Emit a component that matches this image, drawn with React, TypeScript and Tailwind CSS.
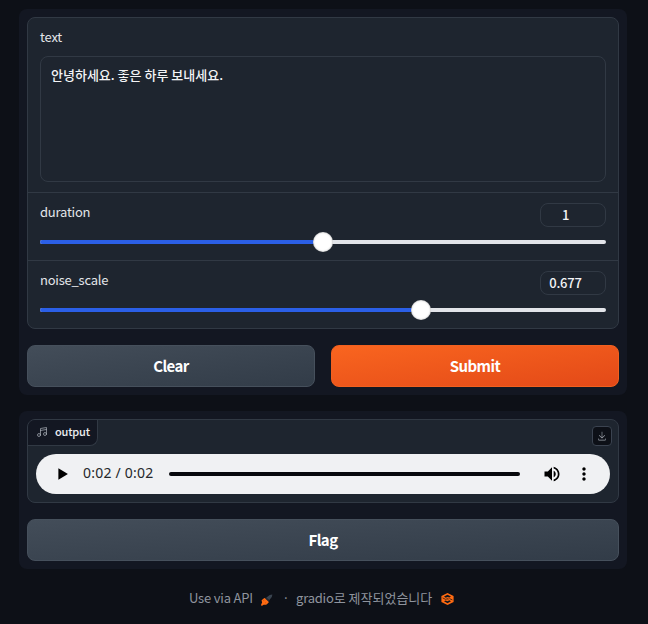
import React from "react";

function Slider({ label, value, percent, last }: { label: string; value: string; percent: number; last?: boolean }) {
  return (
    <div className={last ? "h-[67px] px-3" : "h-[68px] border-b border-[#313944] px-3"}>
      <div className="flex h-[34px] items-start justify-between pt-2.5">
        <label className="-mt-px text-[13px] leading-5 tracking-[-0.22px] text-[#e3e6ea]">{label}</label>
        <div className="flex h-6 w-[66px] items-center rounded-lg border border-[#313944] pl-px pr-4">
          <span className="w-full text-center text-[13px] font-medium leading-5 tracking-[-0.2px] text-[#f3f4f6]">{value}</span>
        </div>
      </div>
      <div className="relative mt-[13px] h-1 rounded-full bg-[#e2e4e9]">
        <div className="h-1 rounded-full bg-[#2b5fe6]" style={{ width: `${percent}%` }} />
        <div
          className="absolute -top-2 size-5 -translate-x-1/2 rounded-full bg-white shadow-[inset_0_0_2px_rgba(0,0,0,0.4)]"
          style={{ left: `${percent}%` }}
        />
      </div>
    </div>
  );
}

const secondary =
  "flex h-[42px] items-center justify-center rounded-lg border border-[#46505c] bg-linear-to-br from-[#434d59] to-[#323c48] pt-px text-[15px] font-bold tracking-[-0.55px] text-white";

function MusicIcon() {
  return (
    <svg className="-mt-0.5 size-3" viewBox="0 0 24 24" fill="none" stroke="#a4a9b2" strokeWidth="1.5" strokeLinecap="round" strokeLinejoin="round">
      <path d="M9 18V5l12-2v13" />
      <path d="M9 9l12-2" />
      <circle cx="6" cy="18" r="3" />
      <circle cx="18" cy="16" r="3" />
    </svg>
  );
}

function DownloadIcon() {
  return (
    <svg className="size-2.5" viewBox="0 0 32 32" fill="#9ca1aa">
      <path d="M26 24v4H6v-4H4v4a2 2 0 0 0 2 2h20a2 2 0 0 0 2-2v-4zm0-10l-1.41-1.41L17 20.17V2h-2v18.17l-7.59-7.58L6 14l10 10l10-10z" />
    </svg>
  );
}

function ApiIcon() {
  return (
    <svg className="mt-[3px] h-3 w-[13px] shrink-0" viewBox="0 0 13 12">
      <path d="M6.2 3.7 9.7.9l2.7-.5-.6 2.7-2.6 3.1Z" fill="#39434f" />
      <path d="M1.6 6.3 4.3 4l1.1.2L8.5 7.3l.2 1.2-2.5 2.2-2.6.1-1.5.9-1.1-.2.3-1.4.8-1.4Z" fill="#ff6b12" />
      <path d="m5 4.2 1-1 3.7 3.5-1 1Z" fill="#222a35" />
      <path d="m3.2 6.5 1 .2M5.8 9.4l-.3-1" stroke="#b84205" strokeWidth=".6" />
    </svg>
  );
}

function GradioIcon() {
  return (
    <svg className="mt-0.5 h-3 w-[13px] shrink-0" viewBox="0 0 13 12" fill="none">
      <path d="M6.5 0 12.6 3v6l-6.1 3L.4 9V3Z" fill="#ff6b12" />
      <path d="M6.5 1.8 10 3.6 8.3 4.5 6.5 3.9 4.7 4.8 3 3.6Z" fill="#12151c" />
      <path d="M1.6 4.9 4.7 6.4 6.5 5.6 7.4 6 6.5 6.6" stroke="#2b1a12" strokeWidth=".8" />
      <path d="M11.4 6.9 8.4 5.6" stroke="#2b1a12" strokeWidth=".8" />
      <path d="M3 8.3 4.7 7.5 6.5 8.2 8.3 7.3 10 8.3 6.5 10.2Z" fill="#12151c" />
    </svg>
  );
}

export default function App() {
  return (
    <div className="h-[624px] w-[648px] overflow-hidden bg-[#0d1017] px-[19px] pr-[21px] pt-[9px] font-['Noto_Sans_CJK_KR',sans-serif]">
      <section className="h-[386px] rounded-lg bg-[#131722] p-2">
        <div className="h-[312px] rounded-lg border border-[#313944] bg-[#1e252f]">
          <div className="h-[175px] border-b border-[#313944] px-3 pt-[9px]">
            <label className="block text-[13px] leading-5 tracking-[-0.2px] text-[#e3e6ea]">text</label>
            <div className="mt-[9px] h-[126px] rounded-lg border border-[#313944] px-2.5 py-2 text-[13px] font-medium leading-5 text-[#f3f4f6]">
              안녕하세요. 좋은 하루 보내세요.
            </div>
          </div>
          <Slider label="duration" value="1" percent={50} />
          <Slider label="noise_scale" value="0.677" percent={67.3} last />
        </div>
        <div className="mt-4 grid grid-cols-2 gap-4">
          <button className={secondary}>Clear</button>
          <button className="flex h-[42px] items-center justify-center rounded-lg border border-[#f2601f] bg-linear-to-br from-[#f9651f] to-[#e34918] pt-px text-[15px] font-bold tracking-[-0.55px] text-white">
            Submit
          </button>
        </div>
      </section>

      <section className="mt-4 h-[158px] rounded-lg bg-[#131722] p-2">
        <div className="h-[84px] overflow-hidden rounded-lg border border-[#313944] bg-[#1e252f]">
          <div className="flex h-[34px] items-start justify-between">
            <div className="flex h-[26px] w-[70px] items-center gap-[7px] rounded-br-lg border-b border-r border-[#313944] bg-[#131722] pl-2">
              <MusicIcon />
              <span className="-mt-[3px] text-[11px] font-medium leading-4 tracking-[-0.2px] text-[#eceef1]">output</span>
            </div>
            <div className="mr-1.5 mt-1.5 flex size-5 items-center justify-center rounded border border-[#3b4350] bg-[#0d1017]">
              <DownloadIcon />
            </div>
          </div>
          <div className="mx-2 flex h-10 items-center rounded-full bg-[#f0f1f3]">
            <svg className="ml-[22px] h-3 w-2.5" viewBox="0 0 10 12">
              <path d="M.4.2v11.6L9.9 6Z" fill="#000" />
            </svg>
            <span className="-mt-[3px] ml-[15px] w-[86px] whitespace-nowrap font-['Noto_Sans',sans-serif] text-[14px] leading-5 tracking-[0.22px] text-[#25272a]">0:02 / 0:02</span>
            <div className="h-1 w-[351px] rounded-full bg-[#07080c]" />
            <svg className="ml-[22px] size-5" viewBox="0 0 24 24" fill="#000">
              <path d="M3 9v6h4l5 5V4L7 9H3zm13.5 3c0-1.77-1.02-3.29-2.5-4.03v8.05c1.48-.73 2.5-2.25 2.5-4.02zM14 3.23v2.06c2.89.86 5 3.54 5 6.71s-2.11 5.85-5 6.71v2.06c4.01-.91 7-4.49 7-8.77s-2.99-7.86-7-8.77z" />
            </svg>
            <svg className="ml-3 size-5" viewBox="0 0 24 24" fill="#000">
              <path d="M12 8c1.1 0 2-.9 2-2s-.9-2-2-2-2 .9-2 2 .9 2 2 2zm0 2c-1.1 0-2 .9-2 2s.9 2 2 2 2-.9 2-2-.9-2-2-2zm0 6c-1.1 0-2 .9-2 2s.9 2 2 2 2-.9 2-2-.9-2-2-2z" />
            </svg>
          </div>
        </div>
        <button className={`${secondary} mt-4 w-full`}>Flag</button>
      </section>

      <footer className="mt-[19px] flex h-5 items-center pl-[170px] text-[13px] leading-5 text-[#8f949e]">
        <span className="w-[71px] whitespace-nowrap tracking-[-0.2px]">Use via API</span>
        <ApiIcon />
        <span className="ml-[7px] w-3 text-center">·</span>
        <span className="ml-1 w-[145px] whitespace-nowrap">
          <span className="tracking-[-0.2px]">gradio</span>로 제작되었습니다
        </span>
        <GradioIcon />
      </footer>
    </div>
  );
}
